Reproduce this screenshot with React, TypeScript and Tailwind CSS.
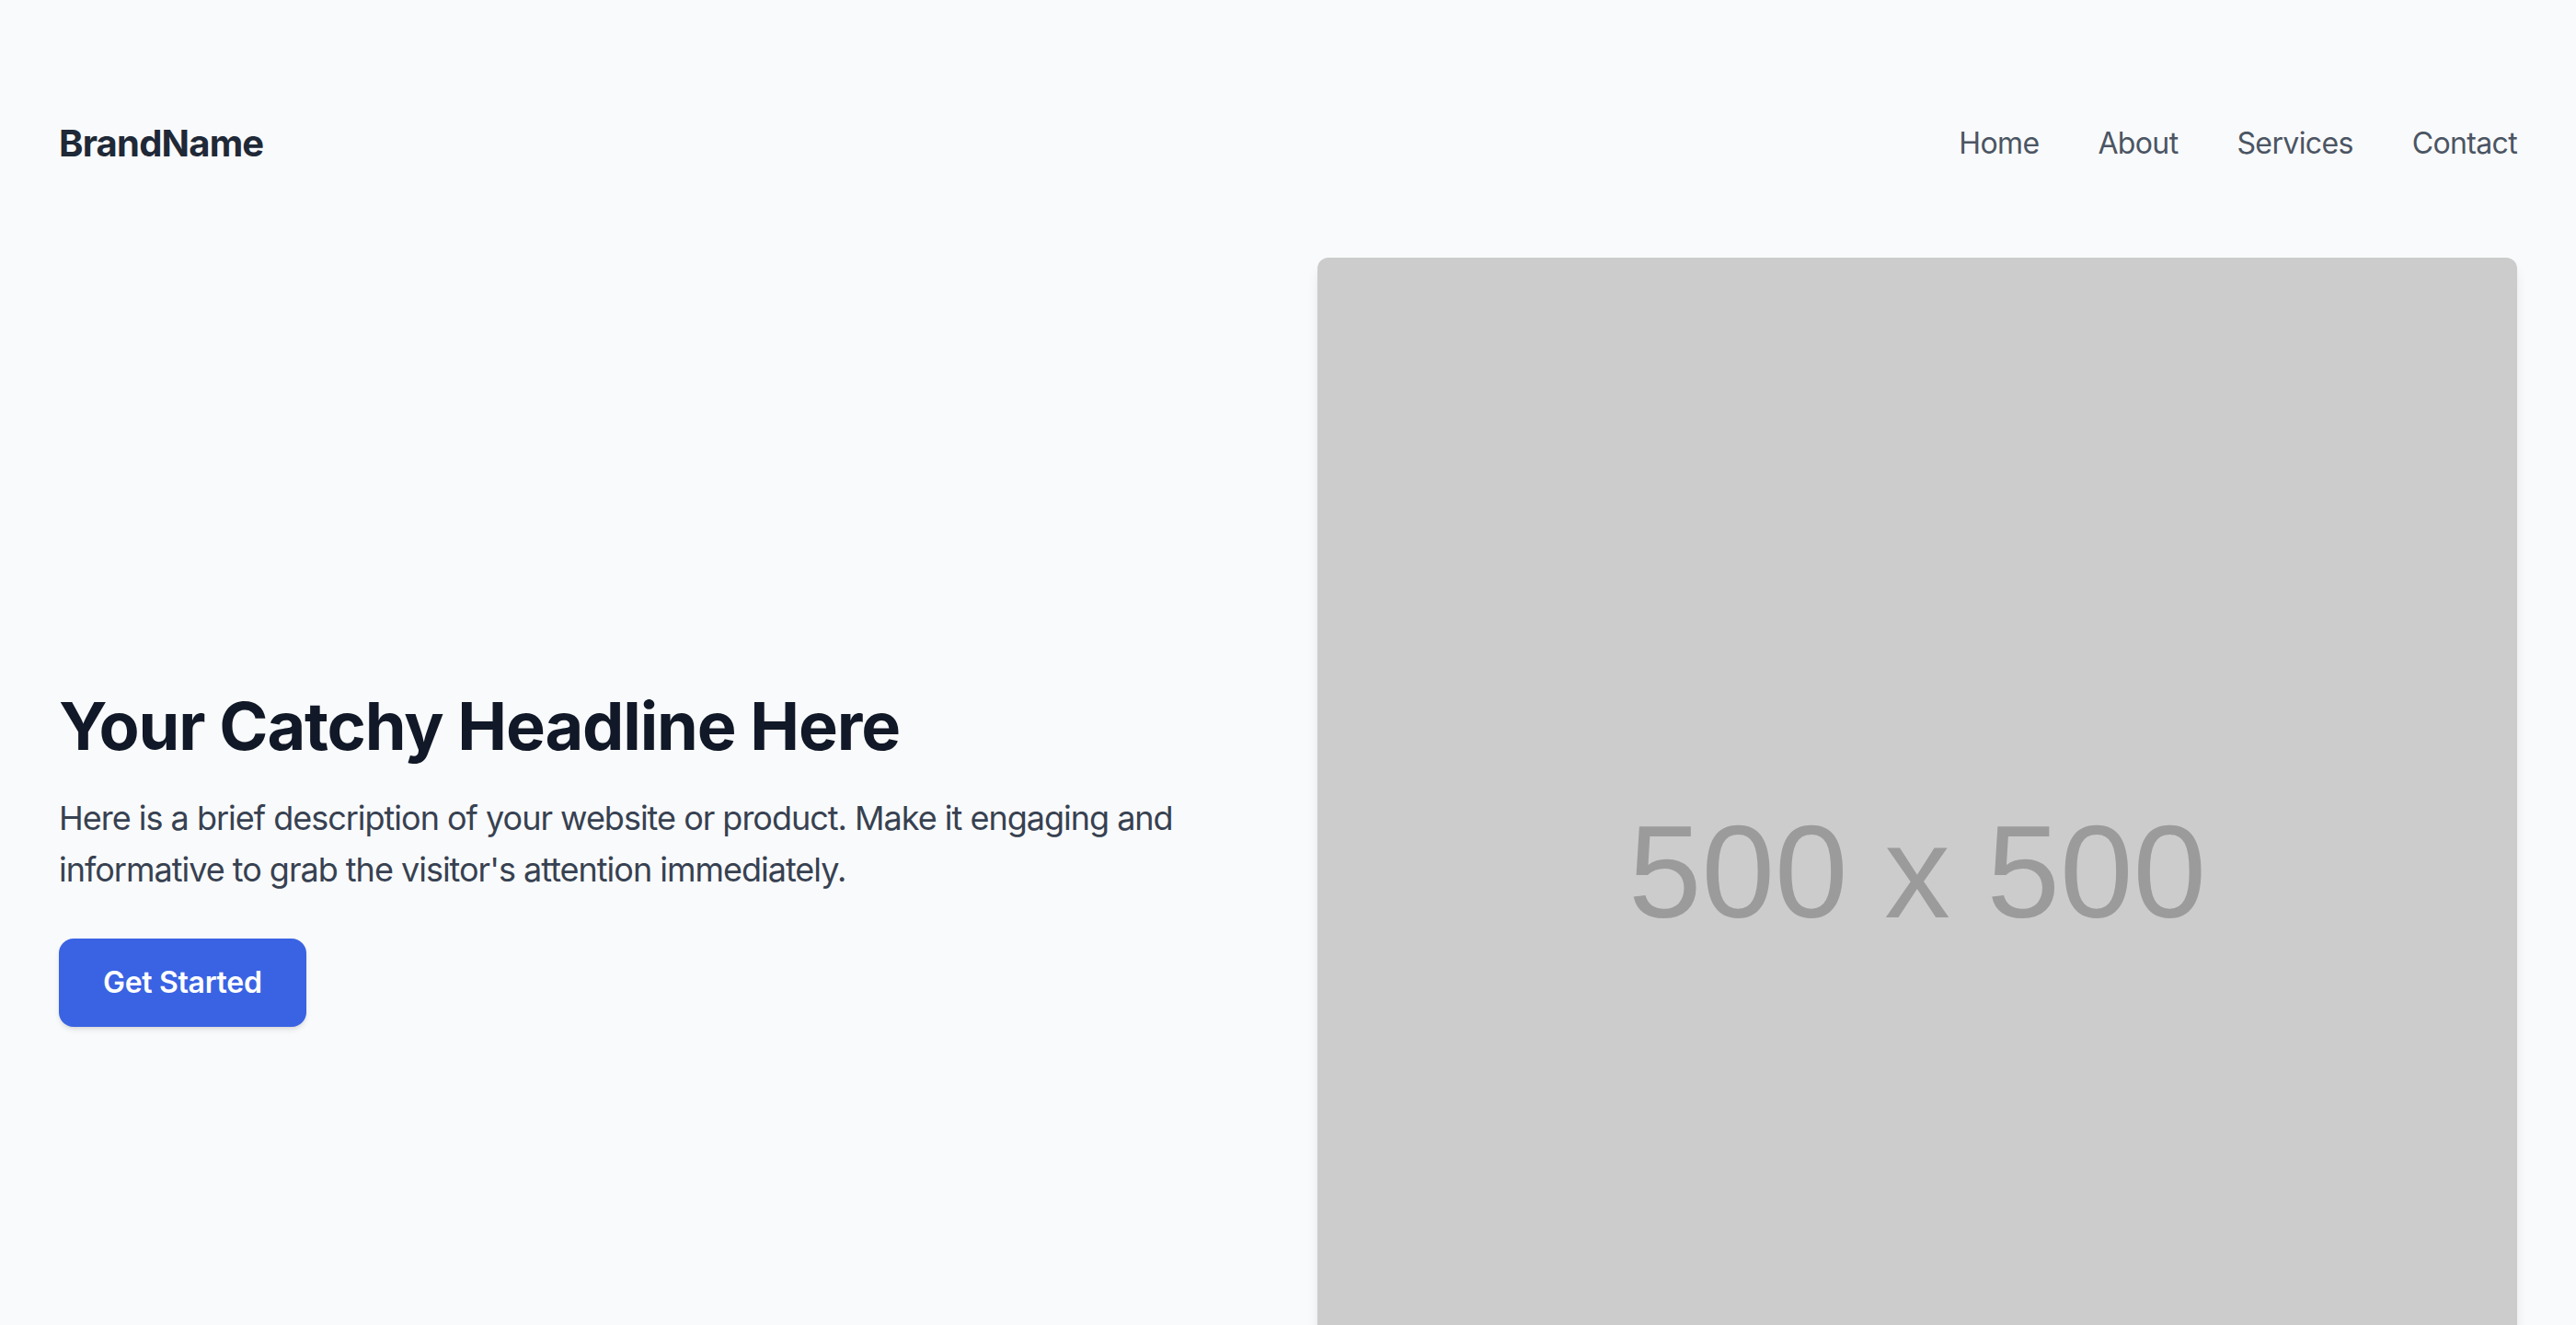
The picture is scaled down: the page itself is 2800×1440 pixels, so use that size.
const navLinks = ['Home', 'About', 'Services', 'Contact'];

export default function App() {
  return (
    <div className="min-h-screen bg-[#f9fafb] px-[64px] pt-[128px] font-['Inter',sans-serif]">
      <header className="flex h-[56px] items-center justify-between">
        <span className="text-[40px] font-bold leading-[56px] tracking-[-0.02em] text-[#1f2937]">BrandName</span>
        <nav className="flex gap-[64px]">
          {navLinks.map((link) => (
            <a key={link} href="#" className="text-[32px] leading-[48px] tracking-[-0.02em] text-[#4b5563]">
              {link}
            </a>
          ))}
        </nav>
      </header>

      <main className="mt-[96px] grid grid-cols-2 items-center gap-[64px]">
        <div>
          <h1 className="mb-[32px] text-[72px] font-bold leading-[80px] tracking-[-0.016em] text-[#111827]">
            Your Catchy Headline Here
          </h1>
          <p className="mb-[47px] text-[36px] leading-[56px] tracking-[-0.028em] text-[#374151]">
            Here is a brief description of your website or product. Make it engaging and informative to
            grab the visitor's attention immediately.
          </p>
          <button className="rounded-[16px] bg-[#3a63e3] px-[48px] py-[24px] text-[32px] font-semibold leading-[48px] tracking-[-0.01em] text-white shadow-md">
            Get Started
          </button>
        </div>

        <div className="flex aspect-square items-center justify-center rounded-[12px] bg-[#cccccc] shadow-lg">
          <span className="mt-[30px] font-['Liberation_Sans',Arial,sans-serif] text-[143px] leading-none text-[#9b9b9b] blur-[0.6px]">
            500 x 500
          </span>
        </div>
      </main>
    </div>
  );
}
